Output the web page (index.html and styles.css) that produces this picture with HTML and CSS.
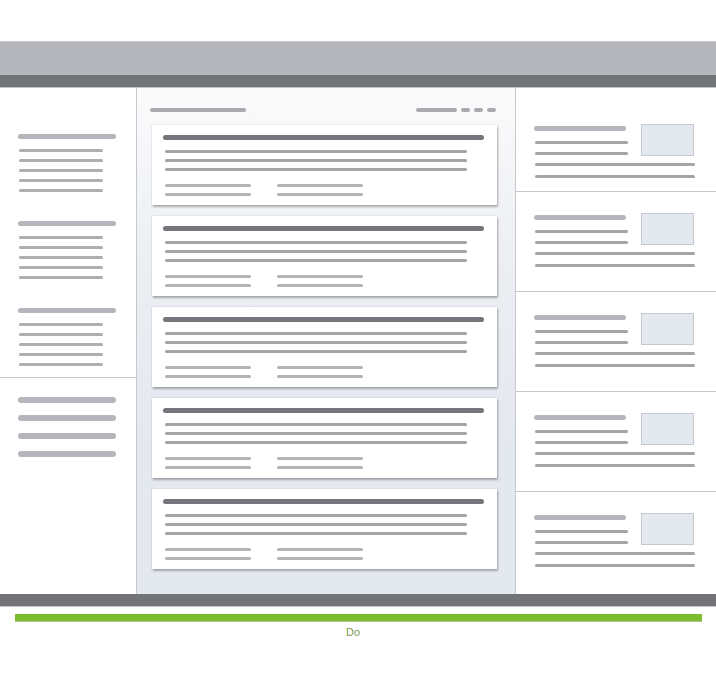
FILE: index.html
```html
<!DOCTYPE html>
<html lang="en">
<head>
    <meta charset="UTF-8">
    <title>layout-wireframe</title>
    <link rel="stylesheet" href="styles.css">
</head>
<body>
<div class="page">
    <header class="masthead">
        <div class="masthead-top"></div>
        <div class="masthead-bar"></div>
    </header>

    <main class="layout">
        <!--left navigation-->
        <aside class="side-nav">
            <div class="nav-groups">
                <div class="nav-group">
                    <span class="bar bar-head"></span>
                    <span class="bar bar-item"></span>
                    <span class="bar bar-item"></span>
                    <span class="bar bar-item"></span>
                    <span class="bar bar-item"></span>
                    <span class="bar bar-item"></span>
                </div>
                <div class="nav-group">
                    <span class="bar bar-head"></span>
                    <span class="bar bar-item"></span>
                    <span class="bar bar-item"></span>
                    <span class="bar bar-item"></span>
                    <span class="bar bar-item"></span>
                    <span class="bar bar-item"></span>
                </div>
                <div class="nav-group">
                    <span class="bar bar-head"></span>
                    <span class="bar bar-item"></span>
                    <span class="bar bar-item"></span>
                    <span class="bar bar-item"></span>
                    <span class="bar bar-item"></span>
                    <span class="bar bar-item"></span>
                </div>
            </div>
            <div class="nav-links">
                <span class="bar bar-head"></span>
                <span class="bar bar-head"></span>
                <span class="bar bar-head"></span>
                <span class="bar bar-head"></span>
            </div>
        </aside>

        <!--main feed-->
        <section class="feed">
            <div class="feed-head">
                <span class="bar feed-title"></span>
                <div class="feed-tools">
                    <span class="bar tool-wide"></span>
                    <span class="bar tool-dot"></span>
                    <span class="bar tool-dot"></span>
                    <span class="bar tool-dot"></span>
                </div>
            </div>
            <div class="card-list">
                <div class="card">
                    <span class="bar card-title"></span>
                    <span class="bar card-line"></span>
                    <span class="bar card-line"></span>
                    <span class="bar card-line"></span>
                    <div class="card-meta">
                        <div class="meta-col"><span class="bar meta-line"></span><span class="bar meta-line"></span></div>
                        <div class="meta-col"><span class="bar meta-line"></span><span class="bar meta-line"></span></div>
                    </div>
                </div>
                <div class="card">
                    <span class="bar card-title"></span>
                    <span class="bar card-line"></span>
                    <span class="bar card-line"></span>
                    <span class="bar card-line"></span>
                    <div class="card-meta">
                        <div class="meta-col"><span class="bar meta-line"></span><span class="bar meta-line"></span></div>
                        <div class="meta-col"><span class="bar meta-line"></span><span class="bar meta-line"></span></div>
                    </div>
                </div>
                <div class="card">
                    <span class="bar card-title"></span>
                    <span class="bar card-line"></span>
                    <span class="bar card-line"></span>
                    <span class="bar card-line"></span>
                    <div class="card-meta">
                        <div class="meta-col"><span class="bar meta-line"></span><span class="bar meta-line"></span></div>
                        <div class="meta-col"><span class="bar meta-line"></span><span class="bar meta-line"></span></div>
                    </div>
                </div>
                <div class="card">
                    <span class="bar card-title"></span>
                    <span class="bar card-line"></span>
                    <span class="bar card-line"></span>
                    <span class="bar card-line"></span>
                    <div class="card-meta">
                        <div class="meta-col"><span class="bar meta-line"></span><span class="bar meta-line"></span></div>
                        <div class="meta-col"><span class="bar meta-line"></span><span class="bar meta-line"></span></div>
                    </div>
                </div>
                <div class="card">
                    <span class="bar card-title"></span>
                    <span class="bar card-line"></span>
                    <span class="bar card-line"></span>
                    <span class="bar card-line"></span>
                    <div class="card-meta">
                        <div class="meta-col"><span class="bar meta-line"></span><span class="bar meta-line"></span></div>
                        <div class="meta-col"><span class="bar meta-line"></span><span class="bar meta-line"></span></div>
                    </div>
                </div>
            </div>
        </section>

        <!--right rail-->
        <aside class="rail">
            <div class="rail-item">
                <div class="rail-row">
                    <div class="rail-text">
                        <span class="bar rail-head"></span>
                        <span class="bar rail-line"></span>
                        <span class="bar rail-line"></span>
                    </div>
                    <div class="rail-thumb"></div>
                </div>
                <span class="bar rail-full"></span>
                <span class="bar rail-full"></span>
            </div>
            <div class="rail-item">
                <div class="rail-row">
                    <div class="rail-text">
                        <span class="bar rail-head"></span>
                        <span class="bar rail-line"></span>
                        <span class="bar rail-line"></span>
                    </div>
                    <div class="rail-thumb"></div>
                </div>
                <span class="bar rail-full"></span>
                <span class="bar rail-full"></span>
            </div>
            <div class="rail-item">
                <div class="rail-row">
                    <div class="rail-text">
                        <span class="bar rail-head"></span>
                        <span class="bar rail-line"></span>
                        <span class="bar rail-line"></span>
                    </div>
                    <div class="rail-thumb"></div>
                </div>
                <span class="bar rail-full"></span>
                <span class="bar rail-full"></span>
            </div>
            <div class="rail-item">
                <div class="rail-row">
                    <div class="rail-text">
                        <span class="bar rail-head"></span>
                        <span class="bar rail-line"></span>
                        <span class="bar rail-line"></span>
                    </div>
                    <div class="rail-thumb"></div>
                </div>
                <span class="bar rail-full"></span>
                <span class="bar rail-full"></span>
            </div>
            <div class="rail-item">
                <div class="rail-row">
                    <div class="rail-text">
                        <span class="bar rail-head"></span>
                        <span class="bar rail-line"></span>
                        <span class="bar rail-line"></span>
                    </div>
                    <div class="rail-thumb"></div>
                </div>
                <span class="bar rail-full"></span>
                <span class="bar rail-full"></span>
            </div>
        </aside>
    </main>

    <footer class="page-foot">
        <div class="foot-bar"></div>
        <div class="foot-rule"></div>
        <p class="foot-label">Do</p>
    </footer>
</div>
</body>
</html>
```

FILE: styles.css
```css
/*reset*/
* {
    margin: 0;
    padding: 0;
    box-sizing: border-box;
}

body {
    background-color: #fff;
    font-family: "Liberation Sans", Arial, sans-serif;
}

.page {
    width: 716px;
    padding-top: 41px;
}

.bar {
    display: block;
    border-radius: 3px;
}

/*header*/
.masthead-top {
    height: 34px;
    background-color: #b5b7bc;
    border-top: 1px solid #c9cbce;
}

.masthead-bar {
    height: 13px;
    background-color: #727478;
    border-bottom: 1px solid #c4c5c8;
}

/*three columns*/
.layout {
    display: grid;
    grid-template-columns: 137px 379px 200px;
    height: 506px;
}

.side-nav {
    border-right: 1px solid #c6c8cb;
    display: flex;
    flex-direction: column;
}

.nav-groups {
    padding: 46px 0 11px 18px;
    border-bottom: 1px solid #c6c8cb;
    display: flex;
    flex-direction: column;
    gap: 29px;
}

.nav-group {
    display: flex;
    flex-direction: column;
    gap: 7px;
}

.bar-head {
    width: 98px;
    height: 6px;
    background-color: #b4b6bb;
}

.nav-group .bar-head {
    height: 5px;
    margin-bottom: 3px;
}

.bar-item {
    width: 84px;
    height: 3px;
    margin-left: 1px;
    background-color: #adafb3;
}

.nav-links {
    padding: 19px 0 0 18px;
    display: flex;
    flex-direction: column;
    gap: 12px;
}

/*feed*/
.feed {
    border-right: 1px solid #c6c8cb;
    background: linear-gradient(#fbfbfc 0%, #eceef2 35%, #e4e8ef 70%);
    padding: 20px 18px 0 13px;
}

.feed-head {
    display: flex;
    justify-content: space-between;
    padding-right: 1px;
}

.feed-head .bar {
    height: 4px;
    background-color: #a9abaf;
}

.feed-title {
    width: 96px;
}

.feed-tools {
    display: flex;
    gap: 4px;
}

.tool-wide {
    width: 41px;
}

.tool-dot {
    width: 9px;
}

.card-list {
    margin: 13px 0 0 2px;
    display: flex;
    flex-direction: column;
    gap: 11px;
}

.card {
    height: 80px;
    background-color: #fff;
    padding: 10px 13px 0 11px;
    box-shadow: 1px 2px 2px rgba(0, 0, 0, .28), 0 0 0 1px rgba(0, 0, 0, .04);
}

.card-title {
    height: 5px;
    background-color: #74767b;
    margin-bottom: 10px;
}

.card-line {
    width: 302px;
    height: 3px;
    margin: 0 0 6px 2px;
    background-color: #a2a4a8;
}

.card-meta {
    display: flex;
    gap: 26px;
    margin: 13px 0 0 2px;
}

.meta-col {
    display: flex;
    flex-direction: column;
    gap: 6px;
}

.meta-line {
    width: 86px;
    height: 3px;
    background-color: #b2b4b8;
}

/*right rail*/
.rail {
    display: flex;
    flex-direction: column;
}

.rail-item {
    height: 100px;
    padding: 21px 0 0 18px;
    border-bottom: 1px solid #c6c8cb;
}

.rail-item:first-child {
    height: 104px;
    padding-top: 36px;
}

.rail-item:last-child {
    flex: 1;
    border-bottom: none;
}

.rail-row {
    display: flex;
    gap: 13px;
}

.rail-text {
    width: 94px;
    padding-top: 2px;
}

.rail-head {
    width: 92px;
    height: 5px;
    background-color: #b4b6bb;
}

.rail-line {
    width: 93px;
    height: 3px;
    margin: 10px 0 0 1px;
    background-color: #a2a4a8;
}

.rail-line + .rail-line {
    margin-top: 8px;
}

.rail-thumb {
    width: 53px;
    height: 32px;
    background-color: #e4e8ef;
    border: 1px solid #c5c8cd;
}

.rail-full {
    width: 160px;
    height: 3px;
    margin: 7px 0 0 1px;
    background-color: #a2a4a8;
}

.rail-full + .rail-full {
    margin-top: 9px;
}

/*footer*/
.foot-bar {
    height: 13px;
    background-color: #727478;
    border-bottom: 1px solid #c4c5c8;
}

.foot-rule {
    height: 8px;
    margin: 7px 14px 0 15px;
    background-color: #7bbd2f;
    border-bottom: 1px solid #a9c98a;
}

.foot-label {
    margin-top: 3px;
    padding-right: 10px;
    text-align: center;
    font-size: 11px;
    line-height: 14px;
    color: #7b9c52;
}
```
